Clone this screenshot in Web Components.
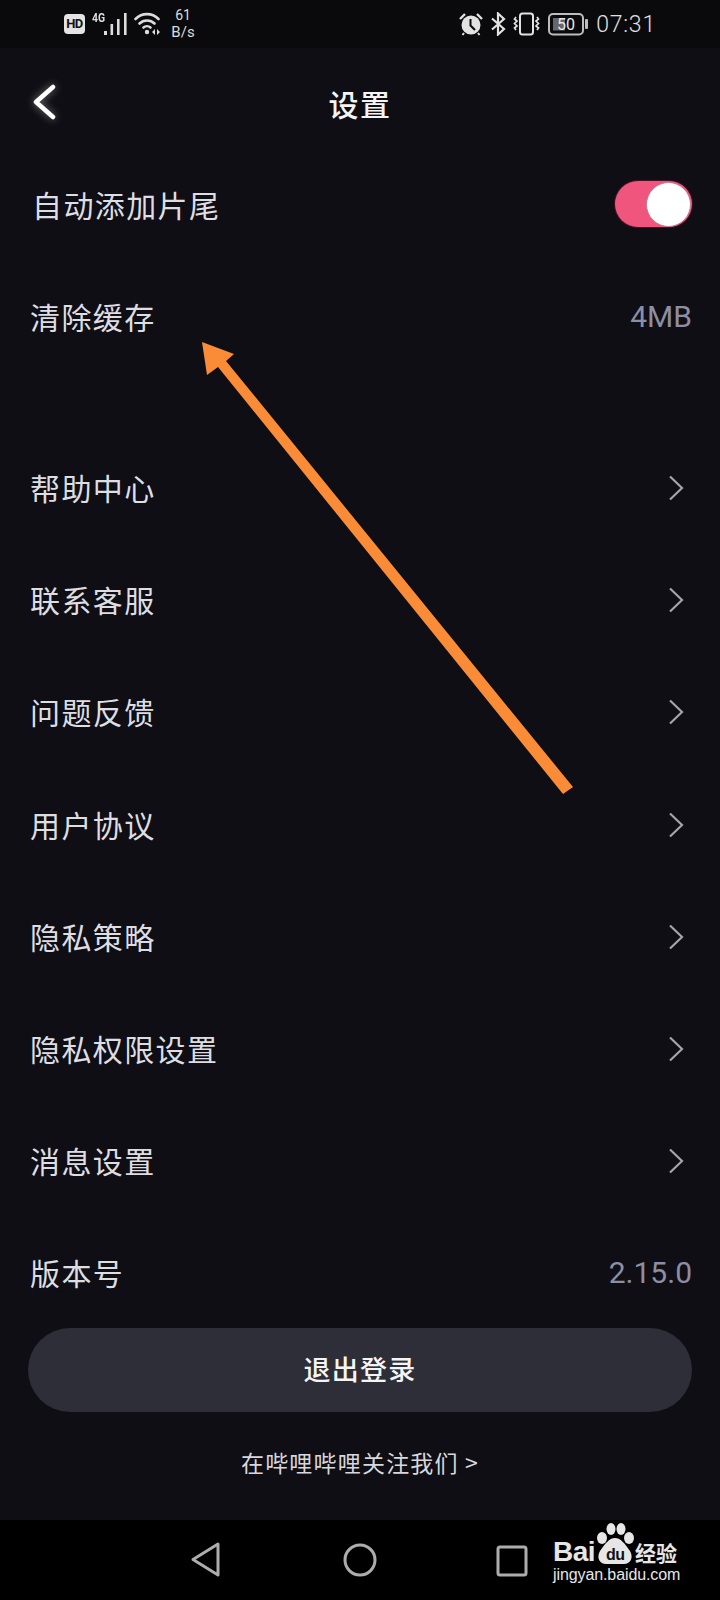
<!DOCTYPE html>
<html lang="zh">
<head>
<meta charset="utf-8">
<title>设置</title>
<style>
    html, body { margin: 0; padding: 0; background: #0e0e14; }
    body { font-family: "Noto Sans CJK SC", "Noto Sans", sans-serif; }
</style>
</head>
<body>
<app-screen>
    <app-status-bar></app-status-bar>
    <app-title-bar>设置</app-title-bar>

    <setting-row><span style="margin-left:2px">自动添加片尾</span><toggle-switch slot="end"></toggle-switch></setting-row>
    <setting-row value="4MB">清除缓存</setting-row>

    <setting-group>
        <setting-row link>帮助中心</setting-row>
        <setting-row link>联系客服</setting-row>
        <setting-row link>问题反馈</setting-row>
        <setting-row link>用户协议</setting-row>
        <setting-row link>隐私策略</setting-row>
        <setting-row link>隐私权限设置</setting-row>
        <setting-row link>消息设置</setting-row>
        <setting-row value="2.15.0">版本号</setting-row>
    </setting-group>

    <logout-button>退出登录</logout-button>
    <follow-link>在哔哩哔哩关注我们 &gt;</follow-link>
    <app-nav-bar></app-nav-bar>

    <arrow-note></arrow-note>
    <baidu-mark></baidu-mark>
</app-screen>

<script>
class AppScreen extends HTMLElement {
    constructor() {
        super();
        this.attachShadow({ mode: "open" });
        this.shadowRoot.innerHTML = `
        <style>
            :host {
                position: relative;
                display: flex;
                flex-direction: column;
                width: 720px;
                height: 1600px;
                overflow: hidden;
                background: #0e0e14;
            }
        </style>
        <slot></slot>
        `;
    }
}

class AppStatusBar extends HTMLElement {
    constructor() {
        super();
        this.attachShadow({ mode: "open" });
        this.shadowRoot.innerHTML = `
        <style>
            :host {
                display: flex;
                align-items: center;
                justify-content: space-between;
                height: 48px;
                padding: 0 64px;
                background: #0a0a0c;
                color: #dcdcdc;
                font-family: Roboto, sans-serif;
            }
            .side { display: flex; align-items: center; }
            svg { display: block; }
            .hd {
                width: 21px;
                height: 20px;
                border-radius: 4px;
                background: #e4e4e4;
                color: #111;
                font: 700 13px/20px Roboto, sans-serif;
                text-align: center;
                letter-spacing: -0.5px;
            }
            .net { position: relative; width: 42px; height: 24px; margin-left: 7px; }
            .net b {
                position: absolute;
                left: 0;
                top: -1px;
                font: 700 13px/14px Roboto, sans-serif;
                transform: scaleX(.8);
                transform-origin: left;
            }
            .net svg { position: absolute; left: 11px; top: 0; }
            .speed {
                margin-left: 9px;
                width: 24px;
                text-align: center;
                font-size: 14px;
                line-height: 17px;
            }
            .speed div + div { font-size: 15px; }
            .time { margin-left: 8px; font-size: 23px; font-weight: 300; letter-spacing: .8px; color: #e0e0e0; }
        </style>
        <div class="side">
            <div class="hd">HD</div>
            <div class="net">
                <b>4G</b>
                <svg width="25" height="24" viewBox="0 0 25 24" fill="#dcdcdc">
                    <rect x="1" y="19" width="3" height="4"/>
                    <rect x="7.500" y="12" width="2.600" height="11"/>
                    <rect x="14" y="7" width="2.600" height="16"/>
                    <rect x="21" y="1" width="2.600" height="22"/>
                </svg>
            </div>
            <svg width="28" height="24" viewBox="0 0 28 24" fill="none" stroke="#dcdcdc" stroke-width="2.600" stroke-linecap="round">
                <path d="M1.500 7 C8 0.500 18 0.500 24.500 7"/>
                <path d="M5.500 11.500 C9.500 7.500 16.500 7.500 20.500 11.500"/>
                <path d="M9.500 15.500 C11.500 13.800 14.500 13.800 16.500 15.500"/>
                <circle cx="13" cy="20" r="2.200" fill="#dcdcdc" stroke="none"/>
                <path d="M21 17 L18 20 L21 23 Z M23 17 L26 20 L23 23 Z" fill="#dcdcdc" stroke="none"/>
            </svg>
            <div class="speed"><div>61</div><div>B/s</div></div>
        </div>
        <div class="side">
            <svg width="24" height="24" viewBox="0 0 24 24">
                <circle cx="12" cy="13" r="9.500" fill="#e2e2e2"/>
                <path d="M11.500 7 V13.500 L16 18" fill="none" stroke="#0a0a0c" stroke-width="2"/>
                <path d="M1 7 L6 2 M23 7 L18 2" stroke="#e2e2e2" stroke-width="2.400"/>
                <path d="M5 21 L3.500 23 M19 21 L20.500 23" stroke="#e2e2e2" stroke-width="2"/>
            </svg>
            <svg style="margin-left:7px" width="16" height="24" viewBox="0 0 16 24" fill="none" stroke="#e2e2e2" stroke-width="2.200">
                <path d="M2 6.500 L14 17 L8 22.500 V1.500 L14 7 L2 17.500"/>
            </svg>
            <svg style="margin-left:7px" width="28" height="24" viewBox="0 0 28 24" fill="none" stroke="#e2e2e2">
                <rect x="7" y="1.500" width="13" height="21" rx="2.500" stroke-width="2"/>
                <path d="M3 5 L1.500 7 L4 9 L1.500 11.500 L4 14 L1.500 16 L3 18" stroke-width="1.700"/>
                <path d="M24 5 L25.500 7 L23 9 L25.500 11.500 L23 14 L25.500 16 L24 18" stroke-width="1.700"/>
            </svg>
            <svg style="margin-left:7px" width="40" height="24" viewBox="0 0 40 24">
                <rect x="1" y="2" width="34" height="20.500" rx="4" fill="none" stroke="#bdbdbd" stroke-width="2"/>
                <rect x="5" y="6" width="12" height="12.500" fill="#666"/>
                <rect x="37" y="7" width="3" height="10" rx="1" fill="#bdbdbd"/>
                <text x="18" y="18" text-anchor="middle" font-family="Roboto, sans-serif" font-size="16" fill="#e8e8e8">50</text>
            </svg>
            <div class="time">07:31</div>
        </div>
        `;
    }
}

class AppTitleBar extends HTMLElement {
    constructor() {
        super();
        this.attachShadow({ mode: "open" });
        this.shadowRoot.innerHTML = `
        <style>
            :host {
                position: relative;
                display: flex;
                align-items: center;
                justify-content: center;
                box-sizing: border-box;
                height: 100px;
                padding-top: 10px;
                color: #f4f4f4;
                font-size: 30px;
                font-weight: 500;
                letter-spacing: 1.500px;
            }
            svg {
                position: absolute;
                left: 32px;
                top: 36px;
                overflow: visible;
                filter: drop-shadow(0 0 4px rgba(255,255,255,.45));
            }
        </style>
        <svg width="26" height="38" viewBox="0 0 26 38" fill="none" stroke="#fff" stroke-width="4.500" stroke-linecap="round" stroke-linejoin="round">
            <path d="M21 3 L4 18 L21 33"/>
        </svg>
        <span><slot></slot></span>
        `;
    }
}

class SettingRow extends HTMLElement {
    constructor() {
        super();
        this.attachShadow({ mode: "open" });
        this.shadowRoot.innerHTML = `
        <style>
            :host {
                display: flex;
                align-items: center;
                justify-content: space-between;
                box-sizing: border-box;
                height: 112.200px;
                padding: 0 28px 0 30px;
                color: #dedee2;
                font-size: 30px;
                letter-spacing: 1.400px;
            }
            .value {
                color: #8d8ea3;
                font-family: Roboto, sans-serif;
                font-size: 30px;
                letter-spacing: 0;
            }
            svg { display: block; margin-right: 8px; transform: translateY(1px); }
        </style>
        <span><slot></slot></span>
        <slot name="end"></slot>
        <span class="value" id="value"></span>
        <svg id="chev" width="16" height="26" viewBox="0 0 16 26" fill="none" stroke="#a4a4ac" stroke-width="2.200">
            <path d="M2 1.500 L14 13 L2 24.500"/>
        </svg>
        `;
        const value = this.shadowRoot.getElementById('value');
        if (this.hasAttribute('value')) {
            value.textContent = this.getAttribute('value');
        } else {
            value.remove();
        }
        if (!this.hasAttribute('link')) {
            this.shadowRoot.getElementById('chev').remove();
        }
    }
}

class SettingGroup extends HTMLElement {
    constructor() {
        super();
        this.attachShadow({ mode: "open" });
        this.shadowRoot.innerHTML = `
        <style>
            :host { display: block; margin-top: 58.500px; }
        </style>
        <slot></slot>
        `;
    }
}

class ToggleSwitch extends HTMLElement {
    constructor() {
        super();
        this.attachShadow({ mode: "open" });
        this.shadowRoot.innerHTML = `
        <style>
            :host {
                display: flex;
                justify-content: flex-end;
                align-items: center;
                box-sizing: border-box;
                width: 77px;
                height: 46px;
                padding-right: 1px;
                border-radius: 24px;
                background: #f0567d;
                box-shadow: 0 0 0 1px #4a1122;
            }
            div {
                box-sizing: border-box;
                width: 45px;
                height: 45px;
                border-radius: 50%;
                background: #fff;
                border: 1.500px solid #b87f92;
            }
        </style>
        <div></div>
        `;
    }
}

class LogoutButton extends HTMLElement {
    constructor() {
        super();
        this.attachShadow({ mode: "open" });
        this.shadowRoot.innerHTML = `
        <style>
            :host {
                display: flex;
                align-items: center;
                justify-content: center;
                box-sizing: border-box;
                height: 84px;
                margin: 0 28px;
                padding-bottom: 3px;
                border-radius: 42px;
                background: #2e2e38;
                color: #f4f4f4;
                font-size: 27px;
                font-weight: 500;
                letter-spacing: 1.200px;
            }
        </style>
        <slot></slot>
        `;
    }
}

class FollowLink extends HTMLElement {
    constructor() {
        super();
        this.attachShadow({ mode: "open" });
        this.shadowRoot.innerHTML = `
        <style>
            :host {
                display: block;
                margin-top: 33px;
                height: 34px;
                line-height: 34px;
                text-align: center;
                color: #d8d8dc;
                font-size: 23px;
                letter-spacing: 1.200px;
            }
        </style>
        <slot></slot>
        `;
    }
}

class AppNavBar extends HTMLElement {
    constructor() {
        super();
        this.attachShadow({ mode: "open" });
        this.shadowRoot.innerHTML = `
        <style>
            :host {
                display: block;
                height: 80px;
                margin-top: auto;
                background: #000;
            }
            svg { display: block; }
        </style>
        <svg width="720" height="80" viewBox="0 0 720 80" fill="none" stroke="#adadad" stroke-width="3" stroke-linejoin="round">
            <path d="M218 24 V55 L193 39.500 Z"/>
            <circle cx="360" cy="40" r="15"/>
            <rect x="498" y="27" width="28" height="28" rx="2"/>
        </svg>
        `;
    }
}

class ArrowNote extends HTMLElement {
    constructor() {
        super();
        this.attachShadow({ mode: "open" });
        this.shadowRoot.innerHTML = `
        <style>
            :host { position: absolute; left: 0; top: 0; width: 720px; height: 1600px; pointer-events: none; }
            svg { display: block; }
        </style>
        <svg width="720" height="1600" viewBox="0 0 720 1600">
            <path d="M202 342 L234 354 L226 361 L573 787 L563 794 L218 367 L207 375 Z" fill="#fb8c37"/>
        </svg>
        `;
    }
}

class BaiduMark extends HTMLElement {
    constructor() {
        super();
        this.attachShadow({ mode: "open" });
        this.shadowRoot.innerHTML = `
        <style>
            :host {
                position: absolute;
                left: 552px;
                top: 1522px;
                width: 132px;
                height: 64px;
                color: #e6e6e6;
                font-family: "Liberation Sans", sans-serif;
            }
            span, svg { position: absolute; }
            .bai { left: 1px; top: 15px; font-size: 28px; line-height: 30px; font-weight: 700; letter-spacing: -0.5px; }
            .du { left: 54px; top: 24px; font-size: 16px; line-height: 18px; font-weight: 700; color: #111; letter-spacing: -0.5px; }
            .jing { left: 1px; top: 43px; font-size: 16px; line-height: 20px; white-space: nowrap; letter-spacing: -0.1px; }
            .cn { left: 83px; top: 17px; font: 700 21px/26px "Noto Sans CJK SC", sans-serif; white-space: nowrap; letter-spacing: 0; }
        </style>
        <svg style="left:44px;top:0" width="38" height="42" viewBox="0 0 38 42" fill="#e6e6e6">
            <ellipse cx="15" cy="7" rx="4.500" ry="6"/>
            <ellipse cx="25" cy="7" rx="4.500" ry="6"/>
            <ellipse cx="6" cy="16" rx="5" ry="6"/>
            <ellipse cx="33" cy="16" rx="5" ry="6"/>
            <path d="M19 16 C25 16 29 22 34 29 C38 36 34 42 28 42 L10 42 C4 42 0 36 4 29 C9 22 13 16 19 16 Z"/>
        </svg>
        <span class="bai">Bai</span>
        <span class="du">du</span>
        <span class="cn">经验</span>
        <span class="jing">jingyan.baidu.com</span>
        `;
    }
}

customElements.define("app-screen", AppScreen);
customElements.define("app-status-bar", AppStatusBar);
customElements.define("app-title-bar", AppTitleBar);
customElements.define("setting-row", SettingRow);
customElements.define("setting-group", SettingGroup);
customElements.define("toggle-switch", ToggleSwitch);
customElements.define("logout-button", LogoutButton);
customElements.define("follow-link", FollowLink);
customElements.define("app-nav-bar", AppNavBar);
customElements.define("arrow-note", ArrowNote);
customElements.define("baidu-mark", BaiduMark);
</script>
</body>
</html>
